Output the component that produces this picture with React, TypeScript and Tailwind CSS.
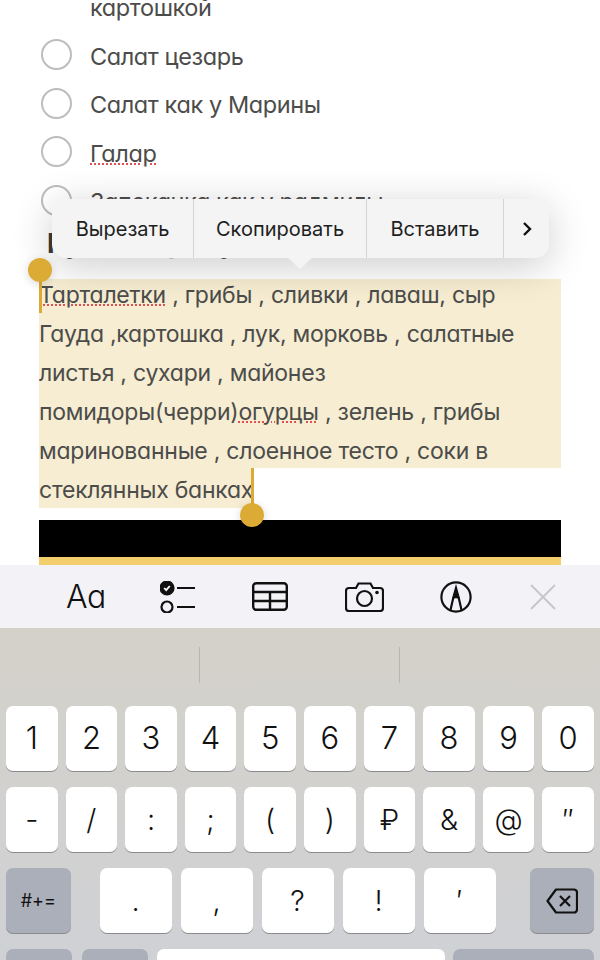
import React from 'react';

const FONT = "font-['Inter','Roboto','Liberation_Sans',sans-serif]";

const CheckRow = ({ label, squiggle }: { label: string; squiggle?: boolean }) => (
  <div className="flex items-center h-[48.5px] pl-[41px]">
    <div className="w-[31px] h-[31px] rounded-full border-2 border-[#bdbdbd] shrink-0 -mt-[3px]" />
    <span
      className={`ml-[18px] text-[23.5px] tracking-[-0.4px] text-[#4c4c4a] [font-feature-settings:'cv11'] ${
        squiggle ? 'underline decoration-dotted decoration-2 decoration-[#e05050] underline-offset-2' : ''
      }`}
    >
      {label}
    </span>
  </div>
);

const Wavy = ({ children }: { children: React.ReactNode }) => (
  <span className="underline decoration-dotted decoration-2 decoration-[#e05050] underline-offset-1">{children}</span>
);

const Key = ({ label, className = 'bg-white' }: { label: React.ReactNode; className?: string }) => (
  <div className={`flex items-center justify-center rounded-[7px] text-[#111] shadow-[0_1px_0_#8a8b8f] ${className}`}>
    {label}
  </div>
);

const row1 = ['1', '2', '3', '4', '5', '6', '7', '8', '9', '0'];
const row2 = ['-', '/', ':', ';', '(', ')', '₽', '&', '@', '″'];
const row3 = ['.', ',', '?', '!', '′'];

const App: React.FC = () => {
  return (
    <div className={`relative w-[600px] h-[960px] overflow-hidden bg-white flex flex-col ${FONT}`}>
      {/* Note */}
      <div className="h-[565px] shrink-0 overflow-hidden">
        <div className="-mt-[16px] h-[48px] pl-[90px] flex items-center text-[23.5px] tracking-[-0.4px] text-[#4c4c4a] [font-feature-settings:'cv11']">
          картошкой
        </div>
        <CheckRow label="Салат цезарь" />
        <CheckRow label="Салат как у Марины" />
        <CheckRow label="Галар" squiggle />
        <CheckRow label="Запеканка как у радмилы" />
        <div className="h-[53px] pl-[47px] text-[27px] leading-[35px] font-bold text-[#3a3a3a] whitespace-nowrap">
          Купить продукты
        </div>

        <div className="mx-[39px] text-[23px] tracking-[-0.25px] leading-[32px] text-[#4c4c4a] [font-feature-settings:'cv11']">
          <div className="h-[39px] bg-[#f6edd2] whitespace-nowrap">
            <Wavy>Тарталетки</Wavy> , грибы , сливки , лаваш, сыр
          </div>
          <div className="h-[39px] bg-[#f6edd2] whitespace-nowrap">Гауда ,картошка , лук, морковь , салатные</div>
          <div className="h-[39px] bg-[#f6edd2] whitespace-nowrap">листья , сухари , майонез</div>
          <div className="h-[39px] bg-[#f6edd2] whitespace-nowrap">
            помидоры(черри)<Wavy>огурцы</Wavy> , зелень , грибы
          </div>
          <div className="h-[33px] bg-[#f6edd2] whitespace-nowrap">маринованные , слоенное тесто , соки в</div>
          <div className="h-[40px] w-[213px] leading-[45px] bg-[#f6edd2] whitespace-nowrap">стеклянных банках</div>
        </div>

        <div className="mx-[39px] mt-[12px] h-[37px] bg-black" />
        <div className="mx-[39px] h-[8px] bg-[#f2cf6c]" />
      </div>

      {/* Toolbar */}
      <div className="h-[63px] shrink-0 bg-[#f3f3f7] flex items-center">
        <div className="w-[172px] pl-[66px] text-[32px] font-light tracking-[-0.5px] text-[#111] [font-feature-settings:'cv11']">Aa</div>
        <svg width="36" height="32" viewBox="0 0 36 32" className="-ml-[12px]" fill="none" stroke="#111" strokeWidth="2.2">
          <circle cx="7" cy="7" r="6.5" fill="#111" />
          <path d="M4.2 7l2 2.2 3.6-4.2" stroke="#fff" strokeWidth="1.8" />
          <path d="M17 7h18M17 26h18" />
          <circle cx="7" cy="26" r="5.5" />
        </svg>
        <svg width="36" height="29" viewBox="0 0 36 29" className="ml-[56px]" fill="none" stroke="#111" strokeWidth="2.4">
          <rect x="1.2" y="1.2" width="33.6" height="26.6" rx="3" />
          <path d="M1 10h34M1 19h34M18 10v18" />
        </svg>
        <svg width="39" height="30" viewBox="0 0 39 30" className="ml-[57px]" fill="none" stroke="#111" strokeWidth="2.2">
          <path d="M4 6h7l2.5-4.5h12L28 6h7a3 3 0 0 1 3 3v17a3 3 0 0 1-3 3H4a3 3 0 0 1-3-3V9a3 3 0 0 1 3-3z" />
          <circle cx="19.5" cy="16.5" r="7.5" />
          <circle cx="32" cy="10.5" r="1.8" fill="#111" stroke="none" />
        </svg>
        <svg width="32" height="32" viewBox="0 0 32 32" className="ml-[56px]" fill="none" stroke="#111" strokeWidth="2.2">
          <circle cx="16" cy="16" r="14.6" />
          <path d="M10.5 29l2.5-11 3-11 3 11 2.5 11" />
          <path d="M16 6l-4 12c2.5-1 5.500-1 8 0z" fill="#111" stroke="none" />
        </svg>
        <svg width="26" height="26" viewBox="0 0 26 26" className="ml-[58px]" fill="none" stroke="#c7c7c9" strokeWidth="2">
          <path d="M1 1l24 24M25 1L1 25" />
        </svg>
      </div>

      {/* Keyboard */}
      <div className="flex-1 bg-gradient-to-b from-[#d4d1c9] to-[#cfd1d7] flex flex-col">
        <div className="h-[78px] shrink-0 flex items-center pb-[5px]">
          <div className="w-px h-[36px] bg-[#b8b6ae] ml-[199px]" />
          <div className="w-px h-[36px] bg-[#b8b6ae] ml-[199px]" />
        </div>

        <div className="h-[65px] shrink-0 flex gap-[8px] px-[6px] text-[31px] font-light">
          {row1.map((k) => (
            <Key key={k} label={k} className="flex-1 bg-white" />
          ))}
        </div>
        <div className="h-[65px] mt-[16px] shrink-0 flex gap-[8px] px-[6px] text-[29px] font-light">
          {row2.map((k) => (
            <Key key={k} label={k} className="flex-1 bg-white" />
          ))}
        </div>
        <div className="h-[65px] mt-[16px] shrink-0 flex px-[6px]">
          <Key label="#+=" className="w-[65px] bg-[#abafb9] text-[18px]" />
          <div className="flex gap-[9px] ml-[29px] text-[29px] font-light">
            {row3.map((k) => (
              <Key key={k} label={k} className="w-[72px] bg-white" />
            ))}
          </div>
          <Key
            className="w-[65px] ml-[34px] bg-[#abafb9]"
            label={
              <svg width="32" height="26" viewBox="0 0 32 26" fill="none" stroke="#111" strokeWidth="2.2">
                <path d="M10 1.5h18a3 3 0 0 1 3 3v17a3 3 0 0 1-3 3H10L1.500 13z" strokeLinejoin="round" />
                <path d="M14 8l10 10M24 8L14 18" />
              </svg>
            }
          />
        </div>
        <div className="h-[65px] mt-[16px] shrink-0 flex px-[6px]">
          <div className="w-[66px] rounded-[7px] bg-[#abafb9]" />
          <div className="w-[66px] ml-[10px] rounded-[7px] bg-[#abafb9]" />
          <div className="w-[288px] ml-[9px] rounded-[7px] bg-white" />
          <div className="w-[141px] ml-[8px] rounded-[7px] bg-[#abafb9]" />
        </div>
      </div>

      {/* Edit menu */}
      <div className="absolute left-[52px] top-[199px] w-[497px] h-[59px] rounded-[14px] bg-[#f4f4f4] shadow-[0_8px_40px_rgba(0,0,0,0.2)] flex items-center text-[20px] text-[#1e1e1e]">
        <div className="w-[142px] h-full pt-[1px] flex items-center justify-center border-r border-[#d4d4d4]">Вырезать</div>
        <div className="w-[173px] h-full pt-[1px] flex items-center justify-center border-r border-[#d4d4d4]">Скопировать</div>
        <div className="w-[137px] h-full pt-[1px] flex items-center justify-center border-r border-[#d4d4d4]">Вставить</div>
        <div className="flex-1 h-full flex items-center justify-center">
          <svg width="10" height="16" viewBox="0 0 10 16" fill="none" stroke="#111" strokeWidth="2.4">
            <path d="M2 2l6 6-6 6" />
          </svg>
        </div>
      </div>
      <svg width="24" height="11" viewBox="0 0 24 11" className="absolute left-[288px] top-[258px]">
        <path d="M0 0h24L12 11z" fill="#f4f4f4" />
      </svg>

      {/* Selection handles */}
      <div className="absolute left-[39px] top-[270px] w-[3px] h-[43px] bg-[#dcab35]" />
      <div className="absolute left-[28px] top-[258px] w-[24px] h-[24px] rounded-full bg-[#dcab35] shadow-[0_2px_10px_rgba(0,0,0,0.15)]" />
      <div className="absolute left-[251px] top-[468px] w-[3px] h-[45px] bg-[#dcab35]" />
      <div className="absolute left-[240px] top-[503px] w-[24px] h-[24px] rounded-full bg-[#dcab35] shadow-[0_2px_10px_rgba(0,0,0,0.15)]" />
    </div>
  );
};

export default App;
